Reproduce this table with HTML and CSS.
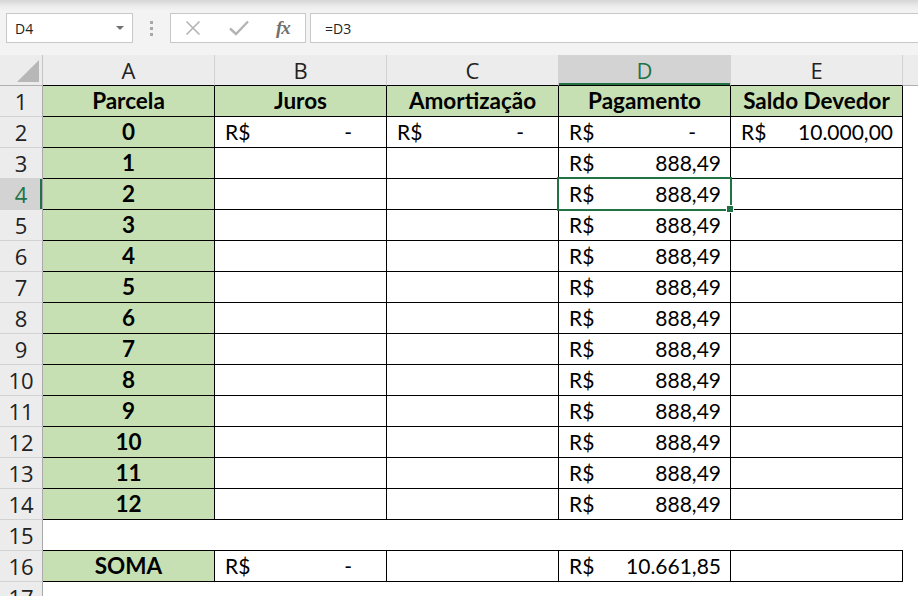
FILE: index.html
```html
<!DOCTYPE html>
<html lang="pt-BR">
<head>
<meta charset="utf-8">
<title>Planilha</title>
<link rel="stylesheet" href="styles.css">
</head>
<body>
<div class="app">
  <div class="top">
    <div class="fbar">
      <div class="namebox"><span>D4</span><span class="caret"></span></div>
      <div class="grip"><i></i><i></i><i></i></div>
      <div class="fxbox">
        <svg class="ico" width="16" height="16" viewBox="0 0 16 16"><path d="M1.5 1.5 L14.5 14.5 M14.5 1.5 L1.5 14.5" stroke="#b4b4b4" stroke-width="1.6" fill="none"/></svg>
        <svg class="ico" width="20" height="16" viewBox="0 0 20 16"><path d="M1 8.5 L7 14 L19 1.5" stroke="#b4b4b4" stroke-width="2.4" fill="none"/></svg>
        <span class="fx">fx</span>
      </div>
      <div class="formula">=D3</div>
    </div>
  </div>
  <div class="sheet">
    <div class="corner"><span class="tri"></span></div>
    <div class="ch">A</div><div class="ch">B</div><div class="ch">C</div><div class="ch sel">D</div><div class="ch">E</div><div class="ch end"></div>

    <div class="rh">1</div><div class="c g">Parcela</div><div class="c g">Juros</div><div class="c g">Amortização</div><div class="c g">Pagamento</div><div class="c g">Saldo Devedor</div><div class="x"></div>

    <div class="rh">2</div><div class="c g">0</div><div class="c acc"><span>R$</span><span class="dash">-</span></div><div class="c acc"><span>R$</span><span class="dash">-</span></div><div class="c acc"><span>R$</span><span class="dash">-</span></div><div class="c acc"><span>R$</span><span>10.000,00</span></div><div class="x"></div>

    <div class="rh">3</div><div class="c g">1</div><div class="c"></div><div class="c"></div><div class="c acc"><span>R$</span><span>888,49</span></div><div class="c"></div><div class="x"></div>
    <div class="rh sel">4</div><div class="c g">2</div><div class="c"></div><div class="c"></div><div class="c acc active"><span>R$</span><span>888,49</span></div><div class="c"></div><div class="x"></div>
    <div class="rh">5</div><div class="c g">3</div><div class="c"></div><div class="c"></div><div class="c acc"><span>R$</span><span>888,49</span></div><div class="c"></div><div class="x"></div>
    <div class="rh">6</div><div class="c g">4</div><div class="c"></div><div class="c"></div><div class="c acc"><span>R$</span><span>888,49</span></div><div class="c"></div><div class="x"></div>
    <div class="rh">7</div><div class="c g">5</div><div class="c"></div><div class="c"></div><div class="c acc"><span>R$</span><span>888,49</span></div><div class="c"></div><div class="x"></div>
    <div class="rh">8</div><div class="c g">6</div><div class="c"></div><div class="c"></div><div class="c acc"><span>R$</span><span>888,49</span></div><div class="c"></div><div class="x"></div>
    <div class="rh">9</div><div class="c g">7</div><div class="c"></div><div class="c"></div><div class="c acc"><span>R$</span><span>888,49</span></div><div class="c"></div><div class="x"></div>
    <div class="rh">10</div><div class="c g">8</div><div class="c"></div><div class="c"></div><div class="c acc"><span>R$</span><span>888,49</span></div><div class="c"></div><div class="x"></div>
    <div class="rh">11</div><div class="c g">9</div><div class="c"></div><div class="c"></div><div class="c acc"><span>R$</span><span>888,49</span></div><div class="c"></div><div class="x"></div>
    <div class="rh">12</div><div class="c g">10</div><div class="c"></div><div class="c"></div><div class="c acc"><span>R$</span><span>888,49</span></div><div class="c"></div><div class="x"></div>
    <div class="rh">13</div><div class="c g">11</div><div class="c"></div><div class="c"></div><div class="c acc"><span>R$</span><span>888,49</span></div><div class="c"></div><div class="x"></div>
    <div class="rh">14</div><div class="c g">12</div><div class="c"></div><div class="c"></div><div class="c acc"><span>R$</span><span>888,49</span></div><div class="c"></div><div class="x"></div>

    <div class="rh">15</div><div class="gap"></div><div class="gap"></div><div class="gap"></div><div class="gap"></div><div class="gap"></div><div class="x"></div>

    <div class="rh">16</div><div class="c g">SOMA</div><div class="c acc"><span>R$</span><span class="dash">-</span></div><div class="c"></div><div class="c acc"><span>R$</span><span>10.661,85</span></div><div class="c"></div><div class="x"></div>

    <div class="rh">17</div><div class="x"></div><div class="x"></div><div class="x"></div><div class="x"></div><div class="x"></div><div class="x"></div>
  </div>
</div>
</body>
</html>
```

FILE: styles.css
```css
* { box-sizing: border-box; }
html, body { margin: 0; padding: 0; }
body {
  width: 918px;
  height: 596px;
  overflow: hidden;
  background: #ffffff;
  font-family: "Open Sans", "Noto Sans", sans-serif;
  color: #000;
}
.app { width: 918px; }

/* formula bar */
.top {
  height: 55px;
  background: linear-gradient(#d6d6d6 0, #ebebeb 6px, #f3f3f3 11px, #f3f3f3 100%);
  padding-top: 13px;
}
.fbar {
  display: flex;
  height: 30px;
  padding-left: 6px;
}
.namebox {
  width: 127px;
  background: #fff;
  border: 1px solid #c8c8c8;
  display: flex;
  align-items: center;
  justify-content: space-between;
  padding: 0 8px 0 8px;
  font-size: 14px;
  color: #222;
}
.caret {
  width: 0; height: 0;
  border-left: 4px solid transparent;
  border-right: 4px solid transparent;
  border-top: 4px solid #707070;
}
.grip {
  width: 37px;
  display: flex;
  flex-direction: column;
  align-items: center;
  justify-content: center;
  gap: 3px;
}
.grip i {
  display: block;
  width: 3px;
  height: 3px;
  background: #a8a8a8;
}
.fxbox {
  width: 136px;
  background: #fff;
  border: 1px solid #c8c8c8;
  display: flex;
  align-items: center;
  padding-left: 14px;
}
.ico { display: block; flex: none; }
.ico + .ico { margin-left: 28px; }
.fx {
  margin-left: 27px;
  font-family: "Liberation Serif", "DejaVu Serif", serif;
  font-style: italic;
  font-weight: 700;
  font-size: 19px;
  color: #707070;
  letter-spacing: -1px;
}
.formula {
  flex: 1;
  margin-left: 4px;
  margin-right: -2px;
  background: #fff;
  border: 1px solid #c8c8c8;
  display: flex;
  align-items: center;
  padding-left: 14px;
  font-size: 14px;
  color: #222;
}

/* sheet grid */
.sheet {
  display: grid;
  grid-template-columns: 43px repeat(5, 172px) 1fr;
  grid-auto-rows: 31px;
}
.corner {
  background: #ececec;
  border-right: 1px solid #c4c4c4;
  border-bottom: 1px solid #b0b0b0;
  display: flex;
  align-items: flex-end;
  justify-content: flex-end;
  padding: 0 3px 3px 0;
}
.tri {
  width: 22px;
  height: 22px;
  background: #b7b7b7;
  clip-path: polygon(100% 0, 100% 100%, 0 100%);
}
.ch {
  background: #ececec;
  border-right: 1px solid #d2d2d2;
  border-bottom: 1px solid #000;
  text-align: center;
  font-size: 22px;
  line-height: 30px;
  color: #222;
}
.ch.sel {
  background: #d3d3d3;
  color: #217346;
  box-shadow: inset 0 -2px 0 #217346;
}
.ch.end {
  border-right: none;
  border-bottom: 1px solid #b0b0b0;
}
.rh {
  background: #ececec;
  border-right: 1px solid #a9a9a9;
  border-bottom: 1px solid #d2d2d2;
  text-align: center;
  font-size: 22px;
  line-height: 30px;
  color: #222;
}
.rh.sel {
  background: #d3d3d3;
  color: #217346;
  box-shadow: inset -2px 0 0 #217346;
}

.c {
  border-right: 1px solid #000;
  border-bottom: 1px solid #000;
  font-family: "Lato", "Liberation Sans", sans-serif;
  font-size: 21px;
  line-height: 30px;
  white-space: nowrap;
}
.g {
  background: #c6e0b4;
  font-weight: 700;
  font-size: 22.5px;
  text-align: center;
}
.acc {
  display: flex;
  justify-content: space-between;
  padding: 0 9px 0 10px;
}
.dash { margin-right: 25px; }
.active { position: relative; }
.active::after {
  content: "";
  position: absolute;
  top: -2px; left: -2px; right: -2px; bottom: -2px;
  border: 2px solid #217346;
}
.active::before {
  content: "";
  position: absolute;
  right: -4px;
  bottom: -4px;
  width: 6px;
  height: 6px;
  background: #217346;
  border: 1px solid #fff;
  z-index: 1;
}
.gap {
  border-bottom: 1px solid #000;
}
.x { background: #fff; }
```
